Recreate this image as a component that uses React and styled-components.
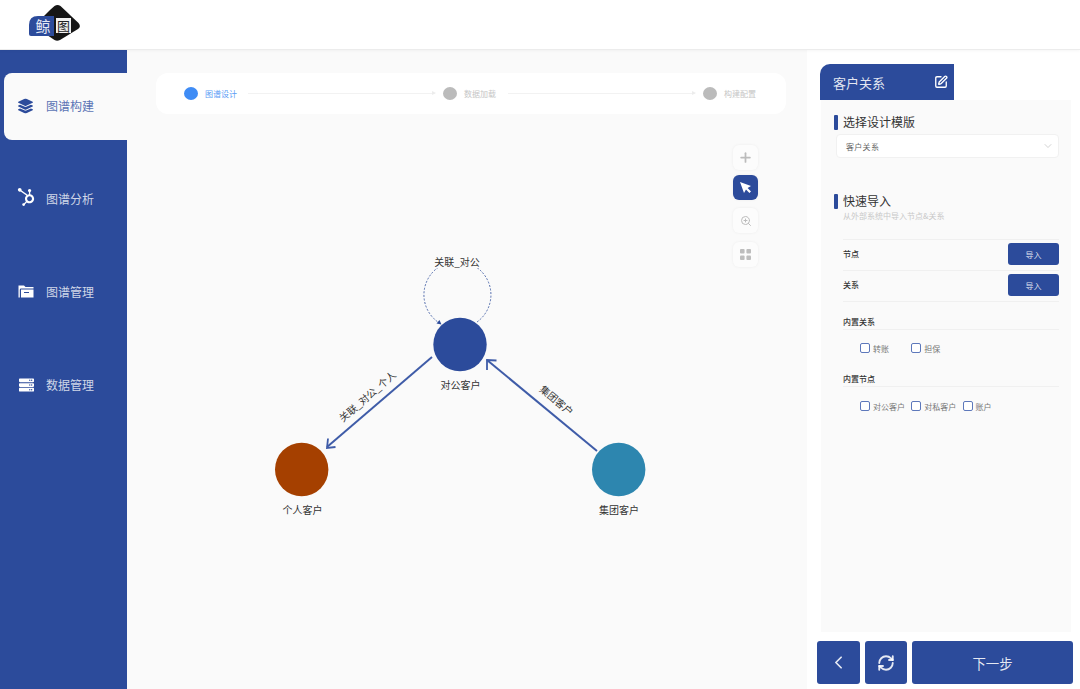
import React from 'react';
import styled, { createGlobalStyle } from 'styled-components';
import { FaLayerGroup, FaHubspot, FaServer } from 'react-icons/fa';
import { ChevronDown, ChevronLeft, Plus, ZoomIn, RefreshCw, SquarePen } from 'lucide-react';

const BLUE = '#2c4b9b';

const Global = createGlobalStyle`
  html, body { margin: 0; padding: 0; height: 100%; background: #fff; }
  body { font-family: "Noto Sans CJK SC", "Noto Sans", sans-serif; overflow: hidden; }
  * { box-sizing: border-box; }
`;

const Page = styled.div`
  display: grid;
  grid-template-rows: 50px 639px;
  grid-template-columns: 127px 680px 273px;
  width: 1080px;
  height: 689px;
`;

const Header = styled.header`
  grid-column: 1 / -1;
  display: flex;
  align-items: flex-start;
  padding: 4px 0 0 28px;
  background: #fff;
  border-bottom: 1px solid #ececec;
  box-shadow: 0 1px 3px rgba(0, 0, 0, 0.04);
  z-index: 2;
`;

const Sidebar = styled.nav`
  display: flex;
  flex-direction: column;
  gap: 26px;
  padding: 23px 0 0 4px;
  background: ${BLUE};
`;

const NavItem = styled.div`
  display: flex;
  align-items: center;
  height: 67px;
  padding: 0 0 3px 14px;
  font-size: 12px;
  border-radius: 8px 0 0 8px;
  background: ${p => (p.$active ? '#fafafa' : 'transparent')};
  color: ${p => (p.$active ? '#5a74b5' : 'rgba(255,255,255,0.78)')};
`;

const NavIcon = styled.span`
  display: flex;
  align-items: center;
  width: ${p => p.$width || 28}px;
  margin-left: ${p => p.$shift || 0}px;
  height: 20px;
  color: ${p => (p.$active ? BLUE : '#fff')};
  transform: translateY(${p => p.$y ?? 0.5}px);
`;

const Main = styled.main`
  display: flex;
  flex-direction: column;
  background: #fafafa;
  min-height: 0;
`;

const StepperWrap = styled.div`
  padding: 23px 21px 0 29px;
`;

const Stepper = styled.div`
  display: flex;
  align-items: center;
  height: 41px;
  padding: 0 28px;
  background: #fff;
  border-radius: 12px;
`;

const Dot = styled.span`
  flex: none;
  width: 14px;
  height: 13px;
  border-radius: 50%;
  background: ${p => (p.$active ? '#3f8cf5' : '#bbbbbb')};
`;

const StepLabel = styled.span`
  flex: none;
  margin-left: 7px;
  width: 34px;
  font-size: 8px;
  line-height: 10px;
  white-space: nowrap;
  color: ${p => (p.$active ? '#5a9cf5' : '#c6c6c6')};
`;

const StepLine = styled.span`
  position: relative;
  flex: 1;
  height: 1px;
  margin: 0 8px 0 ${p => p.$left}px;
  background: #f2f2f2;
  &::after {
    content: '';
    position: absolute;
    right: -1px;
    top: -2px;
    border-left: 4px solid #ececec;
    border-top: 2.5px solid transparent;
    border-bottom: 2.5px solid transparent;
  }
`;

const Canvas = styled.div`
  position: relative;
  flex: 1;
  min-height: 0;
`;

const GraphSvg = styled.svg`
  display: block;
  width: 100%;
  height: 100%;
`;

const Tools = styled.div`
  position: absolute;
  top: 31px;
  left: 606px;
  display: flex;
  flex-direction: column;
  gap: 8.5px;
`;

const ToolButton = styled.div`
  display: flex;
  align-items: center;
  justify-content: center;
  width: 25px;
  height: 25px;
  margin-top: ${p => (p.$active ? '-4px' : '0')};
  border-radius: 6px;
  background: ${p => (p.$active ? BLUE : '#fcfcfc')};
  color: #bcbcbc;
  box-shadow: 0 0 3px rgba(0, 0, 0, 0.06);
`;

const Right = styled.aside`
  display: flex;
  flex-direction: column;
  padding-top: 14px;
  background: #fff;
  min-height: 0;
`;

const Tab = styled.div`
  display: flex;
  align-items: center;
  justify-content: space-between;
  width: 134px;
  height: 36px;
  margin-left: 13px;
  padding: 0 6px 0 13px;
  background: ${BLUE};
  border-radius: 10px 0 0 0;
  color: rgba(255, 255, 255, 0.88);
  font-size: 13px;
`;

const Card = styled.section`
  flex: 1;
  width: 250px;
  margin-left: 14px;
  padding: 15px 12px 0 13px;
  background: #fafafa;
`;

const Heading = styled.h3`
  display: flex;
  align-items: center;
  gap: 5px;
  height: 14px;
  margin: ${p => p.$top || 0}px 0 0;
  font-size: 12px;
  font-weight: 400;
  line-height: 14px;
  color: #333;
  &::before {
    content: '';
    width: 4px;
    height: 15px;
    background: ${BLUE};
    border-radius: 1px;
  }
`;

const Select = styled.div`
  display: flex;
  align-items: center;
  justify-content: space-between;
  height: 24px;
  margin: 5px 0 0 2px;
  padding: 0 4px 0 9px;
  background: #fff;
  border: 1px solid #f1f1f1;
  border-radius: 4px;
  font-size: 8px;
  letter-spacing: 0.3px;
  color: #666;
`;

const Hint = styled.p`
  margin: 3px 0 0 9px;
  font-size: 8px;
  line-height: 10px;
  color: #c8c8c8;
`;

const Rows = styled.div`
  margin: 18px 0 0 9px;
  border-top: 1px solid #f0f0f0;
`;

const Row = styled.div`
  display: flex;
  align-items: flex-start;
  justify-content: space-between;
  height: 31px;
  padding-top: 3px;
  border-bottom: 1px solid #f0f0f0;
`;

const RowLabel = styled.span`
  font-size: 8px;
  font-weight: 500;
  line-height: 22px;
  color: #333;
`;

const ImportButton = styled.button`
  width: 51px;
  height: 22px;
  padding: 0;
  border: 0;
  border-radius: 3px;
  background: ${BLUE};
  color: rgba(255, 255, 255, 0.85);
  font: inherit;
  font-size: 8px;
`;

const SubTitle = styled.div`
  margin: ${p => p.$top}px 0 0 9px;
  height: 13px;
  font-size: 8px;
  font-weight: 500;
  line-height: 10px;
  color: #333;
  border-bottom: 1px solid #f0f0f0;
`;

const Checks = styled.div`
  display: flex;
  margin: ${p => p.$top}px 0 0 26px;
`;

const CheckItem = styled.label`
  display: flex;
  align-items: center;
  gap: 3px;
  width: 51.3px;
  height: 10px;
  font-size: 8px;
  color: #777;
  white-space: nowrap;
`;

const Box = styled.span`
  flex: none;
  width: 10px;
  height: 10px;
  background: #fff;
  border: 1.2px solid #5d78bb;
  border-radius: 2px;
`;

const Footer = styled.div`
  display: flex;
  gap: 5px;
  padding: 9px 7px 5px 10px;
`;

const FootButton = styled.button`
  display: flex;
  align-items: center;
  justify-content: center;
  flex: ${p => (p.$grow ? 1 : 'none')};
  width: ${p => (p.$grow ? 'auto' : `${p.$width}px`)};
  height: 43px;
  padding: ${p => (p.$grow ? '1px 0 0' : '0')};
  border: 0;
  border-radius: 3px;
  background: ${BLUE};
  color: rgba(255, 255, 255, 0.88);
  font: inherit;
  font-size: 13.4px;
`;

const Logo = () => (
  <svg width="54" height="40" viewBox="28 4 54 40">
    <path d="M50 10 L54.5 6 Q57.5 4 60.5 6 L78.5 23 Q81.5 26.5 78 29 L60 40 Q57 41.5 54.5 40 L47 35 L40 20 Z" fill="#161616" />
    <path d="M38 16 H54 V36 H31 Q29 36 29 34 V25 Q29 16 38 16 Z" fill={BLUE} />
    <rect x="56" y="18" width="15" height="15" fill="#f2f2f2" />
    <text x="43" y="31.5" fontSize="15" fill="#e4e9f5" textAnchor="middle" fontFamily="Noto Sans CJK SC">鲸</text>
    <text x="63.5" y="30.5" fontSize="13" fill="#222" textAnchor="middle" fontFamily="Noto Sans CJK SC">图</text>
  </svg>
);

const FolderIcon = () => (
  <svg width="16" height="14" viewBox="0 0 16 14">
    <path d="M0.5 1 H6 L7.5 2.5 H15.5 V4 H3 Q1.8 4 1.8 5.2 V13 H0.5 Z" fill="#fff" />
    <path d="M3 5 H15.5 V13 H3 Z" fill="#fff" />
    <path d="M6 8 H11" stroke={BLUE} strokeWidth="1" />
  </svg>
);

const CursorIcon = () => (
  <svg width="13" height="13" viewBox="0 0 13 13">
    <path d="M1 1 L12 5 L8.6 7 L12 10.5 L10.4 12 L7 8.6 L5 12 Z" fill="#fff" />
  </svg>
);

const GridIcon = () => (
  <svg width="11" height="11" viewBox="0 0 11 11" fill="#bdbdbd">
    <rect x="0" y="0" width="4.6" height="4.6" rx="1" />
    <rect x="6.4" y="0" width="4.6" height="4.6" rx="1" />
    <rect x="0" y="6.4" width="4.6" height="4.6" rx="1" />
    <rect x="6.4" y="6.4" width="4.6" height="4.6" rx="1" />
  </svg>
);

const Graph = () => (
  <GraphSvg viewBox="127 114 680 575" fontFamily='"Noto Sans CJK SC", sans-serif'>
    <path d="M477 322 A33.5 33.5 0 1 0 441 324" fill="none" stroke={BLUE} strokeWidth="0.8" strokeDasharray="2 1.6" />
    <path d="M436.5 323.5 L441.5 324.5 L439.5 320" fill={BLUE} />
    <rect x="433" y="256" width="48" height="12" fill="#fafafa" />
    <text x="457" y="265.5" fontSize="10" fill="#333" textAnchor="middle">关联_对公</text>

    <path d="M432 357 L327 447" stroke="#3f5ca8" strokeWidth="2" fill="none" />
    <path d="M335.5 447 L327 448 L328 438.5" stroke="#3f5ca8" strokeWidth="1.8" fill="none" />
    <path d="M597 451 L487 360" stroke="#3f5ca8" strokeWidth="2" fill="none" />
    <path d="M487 370 L487 360 L496.5 360.5" stroke="#3f5ca8" strokeWidth="1.8" fill="none" />

    <text x="368" y="400" fontSize="10" fill="#333" textAnchor="middle" transform="rotate(-41 368 397)">关联_对公_个人</text>
    <text x="556" y="404" fontSize="10" fill="#333" textAnchor="middle" transform="rotate(40 556 401)">集团客户</text>

    <circle cx="460" cy="344.5" r="26.7" fill={BLUE} />
    <circle cx="301.7" cy="469.5" r="26.7" fill="#a54000" />
    <circle cx="618.7" cy="469.5" r="26.7" fill="#2d86af" />

    <text x="460.5" y="389" fontSize="10" fill="#333" textAnchor="middle">对公客户</text>
    <text x="302.5" y="514" fontSize="10" fill="#333" textAnchor="middle">个人客户</text>
    <text x="619" y="514" fontSize="10" fill="#333" textAnchor="middle">集团客户</text>
  </GraphSvg>
);

export default function App() {
  return (
    <Page>
      <Global />
      <Header><Logo /></Header>
      <Sidebar>
        <NavItem $active><NavIcon $active><FaLayerGroup size={15} /></NavIcon>图谱构建</NavItem>
        <NavItem><NavIcon $y={-1} $shift={-1} $width={29}><FaHubspot size={18} /></NavIcon>图谱分析</NavItem>
        <NavItem><NavIcon><FolderIcon /></NavIcon>图谱管理</NavItem>
        <NavItem><NavIcon $shift={1} $width={27}><FaServer size={15} /></NavIcon>数据管理</NavItem>
      </Sidebar>
      <Main>
        <StepperWrap>
          <Stepper>
            <Dot $active /><StepLabel $active>图谱设计</StepLabel>
            <StepLine $left={9} />
            <Dot /><StepLabel>数据加载</StepLabel>
            <StepLine $left={10} />
            <Dot /><StepLabel>构建配置</StepLabel>
          </Stepper>
        </StepperWrap>
        <Canvas>
          <Graph />
          <Tools>
            <ToolButton><Plus size={15} strokeWidth={2.8} /></ToolButton>
            <ToolButton $active><CursorIcon /></ToolButton>
            <ToolButton><ZoomIn size={12} /></ToolButton>
            <ToolButton><GridIcon /></ToolButton>
          </Tools>
        </Canvas>
      </Main>
      <Right>
        <Tab>客户关系<SquarePen size={14} strokeWidth={2.3} color="#fff" /></Tab>
        <Card>
          <Heading>选择设计模版</Heading>
          <Select>客户关系<ChevronDown size={12} color="#b5b5b5" strokeWidth={1.2} /></Select>
          <Heading $top={36}>快速导入</Heading>
          <Hint>从外部系统中导入节点&amp;关系</Hint>
          <Rows>
            <Row><RowLabel>节点</RowLabel><ImportButton>导入</ImportButton></Row>
            <Row><RowLabel>关系</RowLabel><ImportButton>导入</ImportButton></Row>
          </Rows>
          <SubTitle $top={15}>内置关系</SubTitle>
          <Checks $top={13}>
            <CheckItem><Box />转账</CheckItem>
            <CheckItem><Box />担保</CheckItem>
          </Checks>
          <SubTitle $top={21}>内置节点</SubTitle>
          <Checks $top={14}>
            <CheckItem><Box />对公客户</CheckItem>
            <CheckItem><Box />对私客户</CheckItem>
            <CheckItem><Box />账户</CheckItem>
          </Checks>
        </Card>
        <Footer>
          <FootButton $width={43}><ChevronLeft size={21} strokeWidth={2} /></FootButton>
          <FootButton $width={42}><RefreshCw size={18} strokeWidth={2.5} /></FootButton>
          <FootButton $grow>下一步</FootButton>
        </Footer>
      </Right>
    </Page>
  );
}
